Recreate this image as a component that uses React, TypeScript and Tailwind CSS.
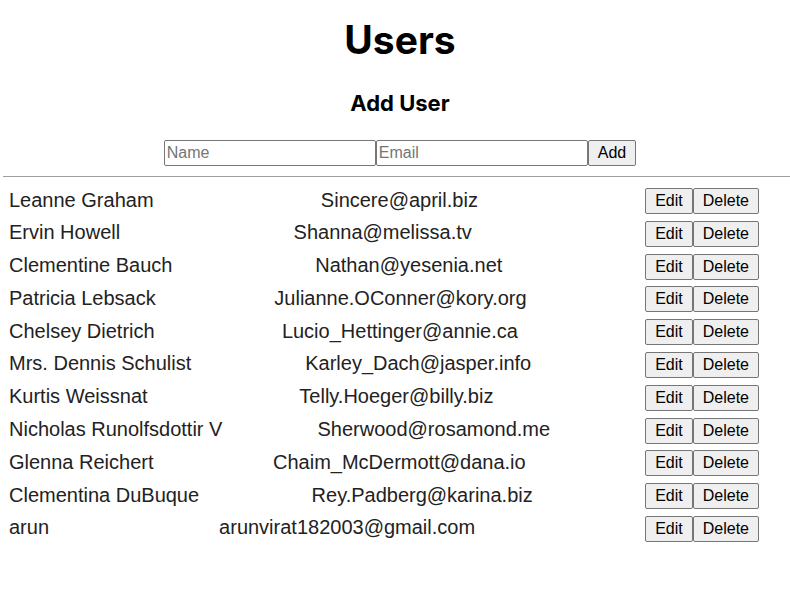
import { useState } from "react";

type User = { id: number; name: string; email: string };

const initialUsers: User[] = [
  { id: 1, name: "Leanne Graham", email: "Sincere@april.biz" },
  { id: 2, name: "Ervin Howell", email: "Shanna@melissa.tv" },
  { id: 3, name: "Clementine Bauch", email: "Nathan@yesenia.net" },
  { id: 4, name: "Patricia Lebsack", email: "Julianne.OConner@kory.org" },
  { id: 5, name: "Chelsey Dietrich", email: "Lucio_Hettinger@annie.ca" },
  { id: 6, name: "Mrs. Dennis Schulist", email: "Karley_Dach@jasper.info" },
  { id: 7, name: "Kurtis Weissnat", email: "Telly.Hoeger@billy.biz" },
  { id: 8, name: "Nicholas Runolfsdottir V", email: "Sherwood@rosamond.me" },
  { id: 9, name: "Glenna Reichert", email: "Chaim_McDermott@dana.io" },
  { id: 10, name: "Clementina DuBuque", email: "Rey.Padberg@karina.biz" },
  { id: 11, name: "arun", email: "arunvirat182003@gmail.com" },
];

const btn =
  "h-[26px] px-[9px] bg-[#efefef] border border-[#767676] rounded-[2px] text-[16px] text-black leading-none";

export default function App() {
  const [users, setUsers] = useState<User[]>(initialUsers);
  const [name, setName] = useState("");
  const [email, setEmail] = useState("");

  const handleAdd = () => {
    if (!name.trim() || !email.trim()) return;
    setUsers((prev) => [...prev, { id: Date.now(), name, email }]);
    setName("");
    setEmail("");
  };

  const handleDelete = (id: number) => {
    setUsers((prev) => prev.filter((u) => u.id !== id));
  };

  return (
    <div className="w-full min-h-screen overflow-hidden bg-white font-['Liberation_Sans',Arial,sans-serif] text-[#222]">
      <div className="ml-[3px] w-[794px] pt-[16px]">
        <h1 className="text-center text-[39px] leading-[48px] font-bold text-black font-['Inter',sans-serif]">
          Users
        </h1>
        <h2 className="mt-[25px] text-center text-[22px] leading-[28px] font-bold text-black font-['Inter',sans-serif]">
          Add User
        </h2>

        {/* Add form */}
        <div className="mt-[23px] flex justify-center">
          <input
            value={name}
            onChange={(e) => setName(e.target.value)}
            placeholder="Name"
            className="w-[212px] h-[26px] px-[2px] border border-[#767676] rounded-[2px] text-[16px] placeholder:text-[#757575] outline-none"
          />
          <input
            value={email}
            onChange={(e) => setEmail(e.target.value)}
            placeholder="Email"
            className="w-[212px] h-[26px] px-[2px] border border-[#767676] rounded-[2px] text-[16px] placeholder:text-[#757575] outline-none"
          />
          <button onClick={handleAdd} className={btn}>
            Add
          </button>
        </div>

        <hr className="mt-[10px] border-t border-[#a0a0a0]" />

        {/* User list */}
        <div className="mt-[11px] ml-[6px] mr-[38px] flex flex-col gap-[6.8px]">
          {users.map((u) => (
            <div key={u.id} className="flex h-[26px] items-center justify-between text-[20px]">
              <span className="-mt-[3px]">{u.name}</span>
              <span className="-mt-[3px]">{u.email}</span>
              <div className="flex">
                <button className={btn}>Edit</button>
                <button onClick={() => handleDelete(u.id)} className={btn}>
                  Delete
                </button>
              </div>
            </div>
          ))}
        </div>
      </div>
    </div>
  );
}
